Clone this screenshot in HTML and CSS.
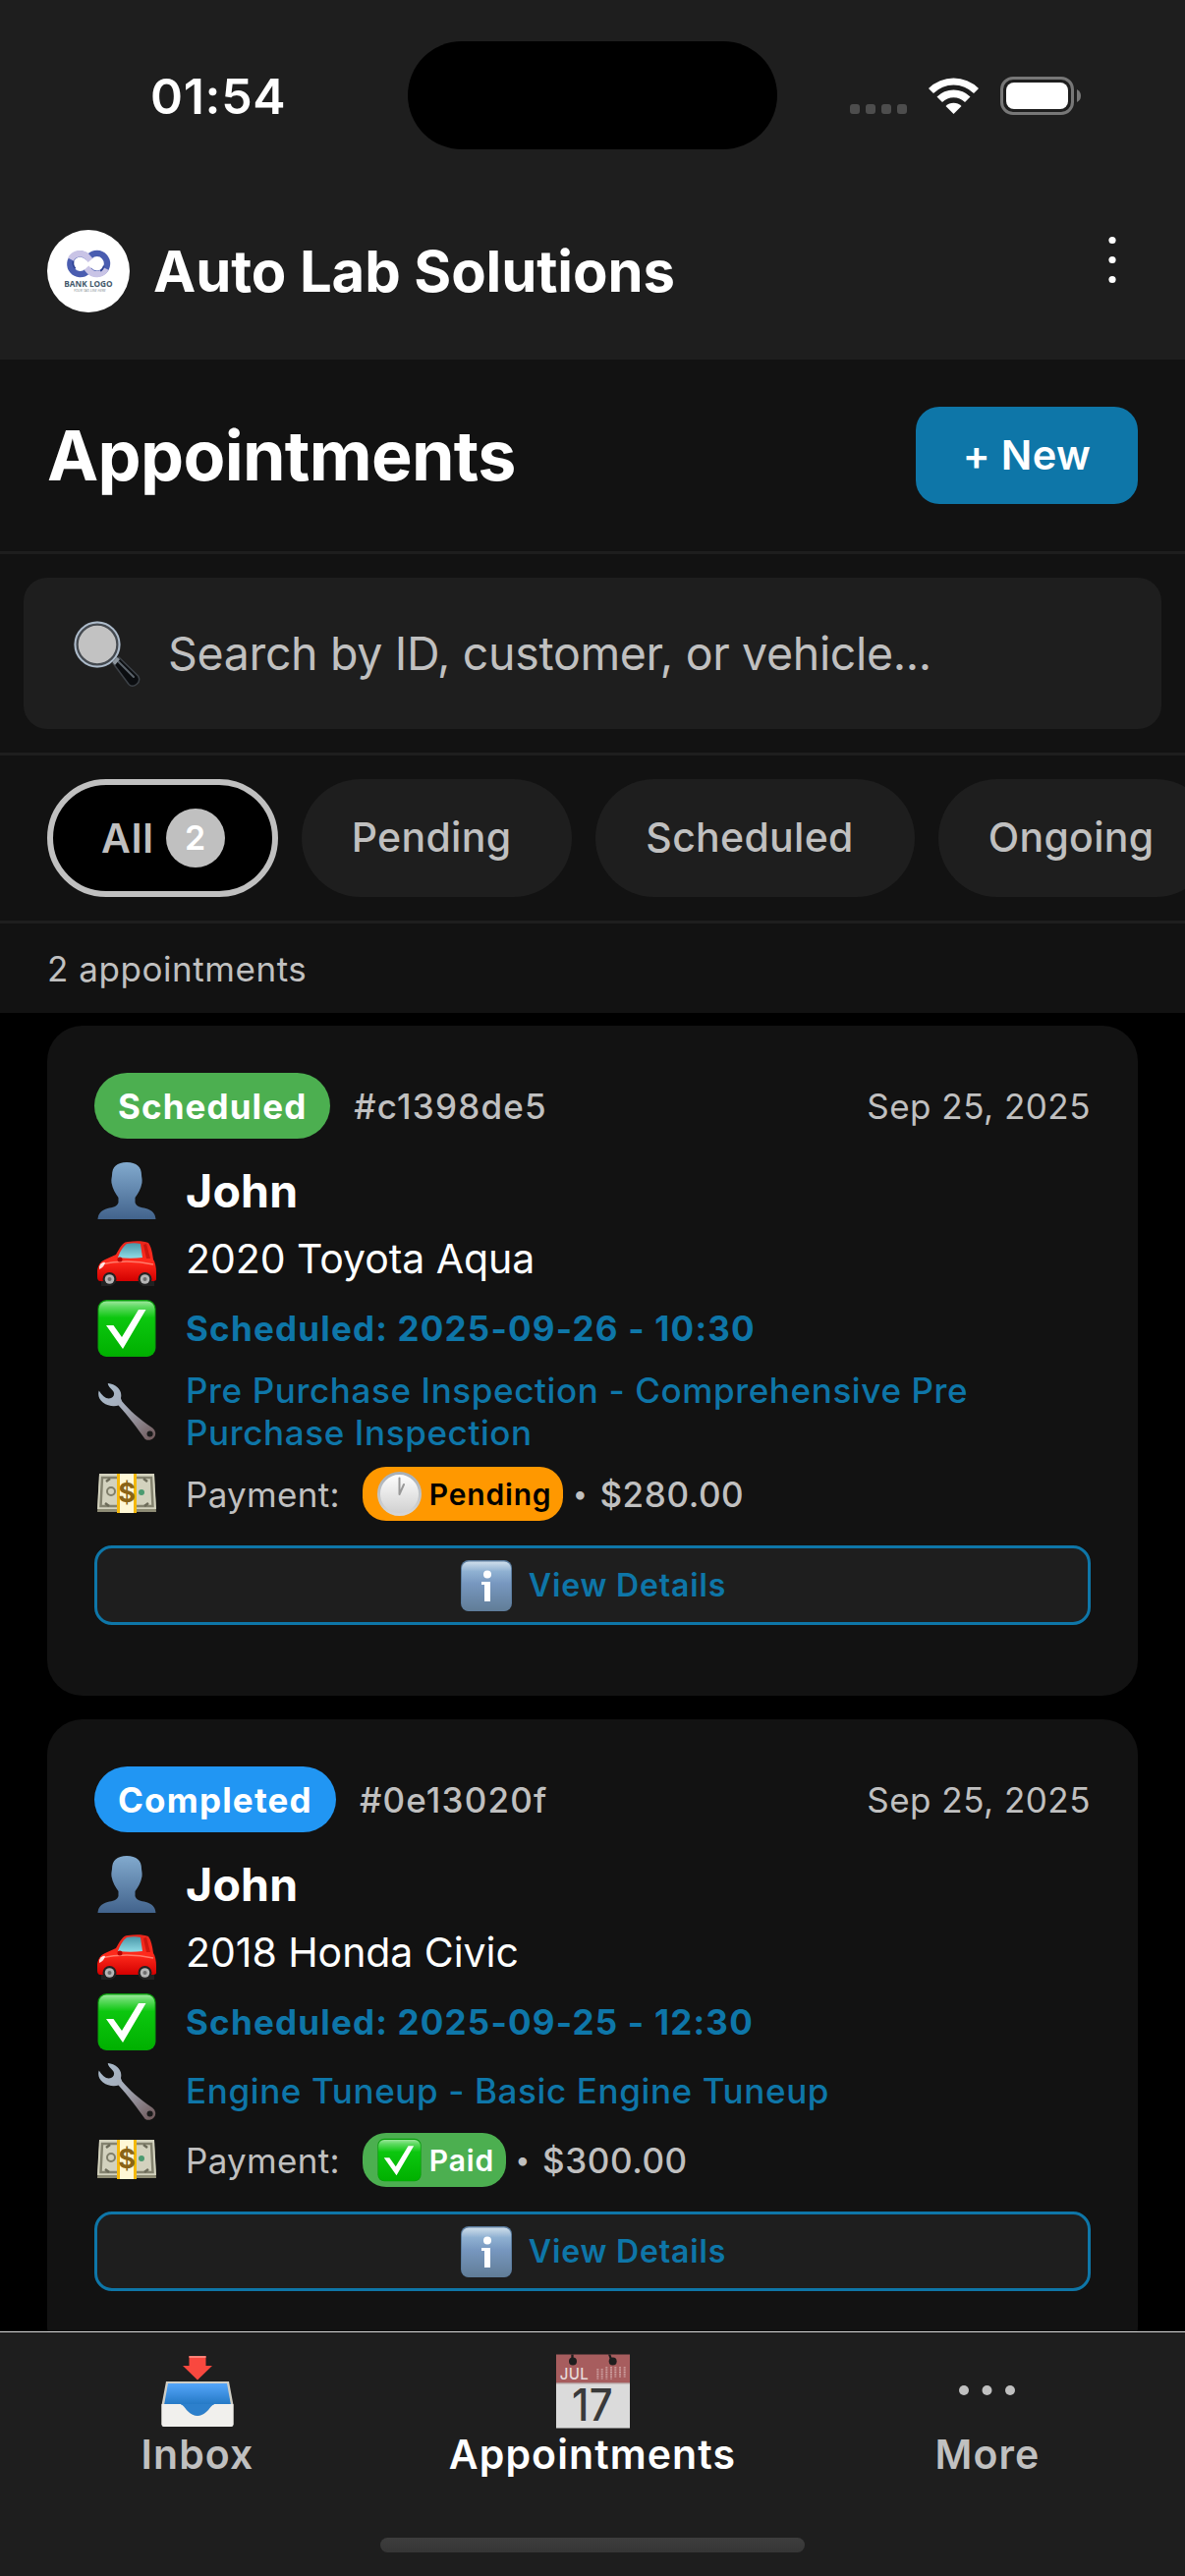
FILE: index.html
```html
<!DOCTYPE html>
<html lang="en">
<head>
<meta charset="utf-8">
<title>Appointments</title>
<link rel="stylesheet" href="styles.css">
</head>
<body>
<svg class="defs" width="0" height="0" aria-hidden="true">
  <defs>
    <linearGradient id="g-person" x1="0" y1="0" x2="0" y2="1"><stop offset="0" stop-color="#82aace"/><stop offset="1" stop-color="#42638c"/></linearGradient>
    <linearGradient id="g-check" x1="0" y1="0" x2="0" y2="1"><stop offset="0" stop-color="#9be89b"/><stop offset=".1" stop-color="#5fda62"/><stop offset=".3" stop-color="#0cc70f"/><stop offset="1" stop-color="#00b000"/></linearGradient>
    <linearGradient id="g-car" x1="0" y1="0" x2="0" y2="1"><stop offset="0" stop-color="#e8261c"/><stop offset=".5" stop-color="#ff2a1c"/><stop offset="1" stop-color="#d30000"/></linearGradient>
    <linearGradient id="g-glass" x1="0" y1="0" x2="0" y2="1"><stop offset="0" stop-color="#4a97a8"/><stop offset="1" stop-color="#8fdbe6"/></linearGradient>
    <linearGradient id="g-wrench" x1="0" y1="0" x2="1" y2="1"><stop offset="0" stop-color="#a9bccd"/><stop offset=".45" stop-color="#a5abb8"/><stop offset="1" stop-color="#6d5556"/></linearGradient>
    <linearGradient id="g-info" x1="0" y1="0" x2="0" y2="1"><stop offset="0" stop-color="#cfdeeb"/><stop offset=".2" stop-color="#8fb1d2"/><stop offset=".45" stop-color="#7797bf"/><stop offset="1" stop-color="#617d97"/></linearGradient>
    <linearGradient id="g-clock" x1="0" y1="0" x2="0" y2="1"><stop offset="0" stop-color="#ffffff"/><stop offset="1" stop-color="#cfcfcf"/></linearGradient>
    <linearGradient id="g-rim" x1="0" y1="0" x2="0" y2="1"><stop offset="0" stop-color="#a8b0b8"/><stop offset="1" stop-color="#d6d6d6"/></linearGradient>
    <linearGradient id="g-tray" x1="0" y1="0" x2="0" y2="1"><stop offset="0" stop-color="#55a6fa"/><stop offset="1" stop-color="#2378c4"/></linearGradient>

    <symbol id="person" viewBox="0 0 60 60"><path fill="url(#g-person)" d="M30 1c-10 0-15 5-15 13 0 2-1 4-.5 8 1 6 4 11 7 15v5c-1 4-6 5-11 6C4 50 1 53 .5 59h59c-.5-6-3.500-9-10-11-5-1-10-2-11-6v-5c3-4 6-9 7-15 .5-4-.5-6-.5-8C45 6 40 1 30 1z"/></symbol>
    <symbol id="car" viewBox="0 0 60 60">
      <path fill="#222" d="M4 44h10v9H4zM46 44h12v9H46z"/>
      <path fill="url(#g-car)" d="M0 39c0-6 3-11 8-13l11-5C23 14 26 8 31 8c8-1 16-1 21 1 3 4 4 10 5 17 2 3 3 8 3 13v7c0 1-1 2-3 2H3c-2 0-3-2-3-4z"/>
      <path fill="url(#g-glass)" d="M21 24c2-6 5-11 9-14 5-1 10-1 14 0l2 14c-8 1-16 1-25 0z"/>
      <path fill="#b30a05" d="M50 10l4 15h-4l-3-14z" opacity=".6"/>
      <path d="M3 31q27-6 54 0" stroke="#ff7a6a" stroke-width="1.500" fill="none"/>
      <path fill="#fff" opacity=".85" d="M2 33q3-5 6-4-1 5-6 7z"/>
      <circle cx="23" cy="26" r="2.500" fill="#b60000"/>
      <circle cx="12.500" cy="46" r="7" fill="#222"/><circle cx="12.500" cy="46" r="4.800" fill="#b5b5b5"/><circle cx="12.500" cy="46" r="2" fill="#6d6d6d"/>
      <circle cx="48.500" cy="46" r="7" fill="#222"/><circle cx="48.500" cy="46" r="4.800" fill="#b5b5b5"/><circle cx="48.500" cy="46" r="2" fill="#6d6d6d"/>
    </symbol>
    <symbol id="check" viewBox="0 0 60 60">
      <rect x=".5" y="1" width="59" height="58" rx="9" fill="#0a9c0d"/><rect x="1.500" y="2.500" width="57" height="56" rx="8" fill="url(#g-check)"/>
      <path fill="#fff" d="M9 27h7.500L25 39 42 11h7.500L26 51z"/>
    </symbol>
    <symbol id="wrench" viewBox="28 35 178 176">
      <path fill="url(#g-wrench)" d="M60 37C86 40 105 58 99 82l4 10c22 26 50 52 92 80a18 18 0 0 1-23 33C150 175 125 140 92 104 80 107 60 107 45 95 33 85 29 72 33 59 42 74 52 82 63 83 76 82 82 72 77 62 72 54 60 47 60 37z"/>
      <circle cx="187" cy="190" r="9" fill="#1a1a1a"/>
    </symbol>
    <symbol id="money" viewBox="0 0 60 42">
      <path fill="#8d8b74" d="M2 3h56l2 37H0z"/>
      <path fill="#d3d2be" d="M2 1h56l2 36H0z"/>
      <path d="M5 5h50l1.500 29h-53z" fill="none" stroke="#84836f" stroke-width="2.500"/>
      <circle cx="14" cy="19" r="4" fill="none" stroke="#807f6b" stroke-width="2"/><circle cx="45" cy="20" r="3" fill="#4b9b70"/>
      <path d="M9 9l4-3M51 9l-4-3M8 31l4 3M52 31l-4 3" stroke="#6c6b59" stroke-width="2.500"/>
      <path fill="#f5b90b" d="M20 1h20v40H20z"/><path fill="#fff8d6" d="M23 1h14v40H23z"/>
      <text x="30" y="30" font-family="Inter" font-size="27" font-weight="700" fill="#8a6417" text-anchor="middle">$</text>
    </symbol>
    <symbol id="clock" viewBox="0 0 45 45">
      <circle cx="22.500" cy="22.500" r="21" fill="url(#g-clock)" stroke="url(#g-rim)" stroke-width="3"/>
      <path d="M22.500 22.500V6.500M22.500 23l4.500-10" stroke="#999" stroke-width="2" stroke-linecap="round"/>
    </symbol>
    <symbol id="info" viewBox="0 0 54 54">
      <rect x="1" y="1" width="52" height="52" rx="8" fill="#5c7d9f"/><rect x="2" y="2.500" width="50" height="50" rx="7" fill="url(#g-info)"/>
      <circle cx="28" cy="15.500" r="4" fill="#fff"/><path fill="#fff" d="M22 23h9v20h-6V26h-3z"/>
    </symbol>
  </defs>
</svg>

<header class="top">
  <div class="status">
    <span class="time">01:54</span>
    <span class="island"></span>
    <svg class="signals" viewBox="860 70 250 54" width="250" height="54">
      <g fill="#4d4d4d"><rect x="865" y="106" width="10" height="10" rx="3"/><rect x="881" y="106" width="10" height="10" rx="3"/><rect x="897" y="106" width="10" height="10" rx="3"/><rect x="913" y="106" width="10" height="10" rx="3"/></g>
      <g fill="#fff"><path d="M945 90a36.500 36.500 0 0 1 51 0l-5 5a29 29 0 0 0-41 0z"/><path d="M953.500 98.500a24 24 0 0 1 34 0l-5.500 5.500a16.500 16.500 0 0 0-23 0z"/><path d="M962.500 108a11.500 11.500 0 0 1 16 0l-8 8z"/></g>
      <rect x="1019.500" y="79.500" width="72" height="36" rx="11.500" fill="none" stroke="#777" stroke-width="3"/>
      <rect x="1024" y="84" width="63" height="27" rx="8" fill="#fff"/>
      <path d="M1096 91q4 2 4 6.500t-4 6.500z" fill="#777"/>
    </svg>
  </div>
  <div class="brand">
    <svg class="logo" viewBox="54 42 252 252" width="84" height="84">
      <circle cx="180" cy="168" r="126" fill="#fff"/>
      <g fill="none" stroke-width="19">
        <path d="M180 128a31 31 0 1 0-4 41" stroke="#4a5db0"/>
        <path d="M181 163a31 31 0 1 0 3-40" stroke="#4a5db0"/>
        <path d="M126 132a31 31 0 0 1 52-6l8 9" stroke="#c9c4e6"/>
        <path d="M174 158l9 10a31 31 0 0 0 50-8" stroke="#c9c4e6"/>
        <path d="M134 138a24 24 0 0 0 6 22M227 152a24 24 0 0 1-10 16" stroke="#2b3f91" stroke-width="5"/>
      </g>
      <text class="logo-name" x="106" y="216" textLength="148" lengthAdjust="spacingAndGlyphs">BANK LOGO</text>
      <text class="logo-tag" x="135" y="230" textLength="98" lengthAdjust="spacingAndGlyphs">YOUR TAG LINE HERE</text>
    </svg>
    <h1>Auto Lab Solutions</h1>
    <svg class="kebab" viewBox="0 0 52 84" width="52" height="84" fill="#fff"><circle cx="26" cy="10.500" r="3.600"/><circle cx="26" cy="30.500" r="3.600"/><circle cx="26" cy="50.500" r="3.600"/></svg>
  </div>
</header>

<section class="heading">
  <h2>Appointments</h2>
  <button class="new">+ New</button>
</section>

<section class="search-bar">
  <div class="search">
    <svg viewBox="72 629 72 72" width="72" height="72">
      <path d="M115 675l6-6 19.500 19q3 5-1.500 8.500t-8 0z" fill="#0b0d10" stroke="#3d4248" stroke-width="1.500"/>
      <path d="M120 673l16 16" stroke="#5b636b" stroke-width="2" stroke-linecap="round"/>
      <path d="M112 671l4-4 6 4-5 6z" fill="#8d969e"/>
      <circle cx="99" cy="656" r="21.500" fill="#c2c2c2" stroke="#454a50" stroke-width="4.500"/>
      <circle cx="99" cy="656" r="22.500" fill="none" stroke="#aebccb" stroke-width="2"/>
    </svg>
    <span>Search by ID, customer, or vehicle...</span>
  </div>
</section>

<nav class="chips">
  <span class="chip active">All<b>2</b></span>
  <span class="chip">Pending</span>
  <span class="chip">Scheduled</span>
  <span class="chip">Ongoing</span>
</nav>

<p class="count">2 appointments</p>

<main class="list">
  <article class="card">
    <div class="card-head"><span class="badge scheduled">Scheduled</span><span class="id">#c1398de5</span><time>Sep 25, 2025</time></div>
    <div class="row"><svg class="ico"><use href="#person"/></svg><span class="name">John</span></div>
    <div class="row"><svg class="ico car"><use href="#car"/></svg><span class="vehicle">2020 Toyota Aqua</span></div>
    <div class="row"><svg class="ico"><use href="#check"/></svg><span class="slot">Scheduled: 2025-09-26 - 10:30</span></div>
    <div class="row two-line"><svg class="ico"><use href="#wrench"/></svg><span class="service">Pre Purchase Inspection - Comprehensive Pre Purchase Inspection</span></div>
    <div class="row pay"><svg class="ico bill"><use href="#money"/></svg><span class="label">Payment:</span><span class="pill pending"><svg><use href="#clock"/></svg>Pending</span><span class="dot">•</span><span class="price">$280.00</span></div>
    <button class="details"><svg><use href="#info"/></svg>View Details</button>
  </article>
  <article class="card">
    <div class="card-head"><span class="badge completed">Completed</span><span class="id">#0e13020f</span><time>Sep 25, 2025</time></div>
    <div class="row"><svg class="ico"><use href="#person"/></svg><span class="name">John</span></div>
    <div class="row"><svg class="ico car"><use href="#car"/></svg><span class="vehicle">2018 Honda Civic</span></div>
    <div class="row"><svg class="ico"><use href="#check"/></svg><span class="slot">Scheduled: 2025-09-25 - 12:30</span></div>
    <div class="row one-line"><svg class="ico"><use href="#wrench"/></svg><span class="service">Engine Tuneup - Basic Engine Tuneup</span></div>
    <div class="row pay"><svg class="ico bill"><use href="#money"/></svg><span class="label">Payment:</span><span class="pill paid"><svg><use href="#check"/></svg>Paid</span><span class="dot">•</span><span class="price">$300.00</span></div>
    <button class="details"><svg><use href="#info"/></svg>View Details</button>
  </article>
</main>

<footer class="tabbar">
  <div class="tabs">
    <div class="tab">
      <svg viewBox="0 0 76 76" width="76" height="76">
        <path d="M6 28h64l4.500 24v20H1.500V52z" fill="#cfcdc4"/>
        <path d="M8 30h60l4 22H4z" fill="url(#g-tray)"/>
        <path d="M1.500 51H20c5 0 7 11 18 12 11-1 13-12 18-12h18.500v21q0 2-2 2h-69q-2 0-2-2z" fill="#f1f0ed"/>
        <path d="M20 51c5 0 7 11 18 12 11-1 13-12 18-12z" fill="#2d80cc"/>
        <path d="M29.500 2h17v10H53L38 26.500 23 12h6.500z" fill="#f9483f"/>
        <path d="M29.500 2h17v2h-17z" fill="#ff8177"/>
      </svg>
      <span>Inbox</span>
    </div>
    <div class="tab current">
      <svg class="calendar" viewBox="45 36 225 225" width="75" height="76">
        <path d="M45 36h225v88H45z" fill="#a75d5e"/><path d="M45 124h225v137H45z" fill="#dbdbdb"/><path d="M45 122h225v4H45z" fill="#b9a5a5"/>
        <path d="M91 36h7v14h-7zM204 36h7l6 16h-7z" fill="#1e1e1e"/><circle cx="96" cy="57" r="12" fill="#1e1e1e"/><circle cx="218" cy="57" r="12" fill="#1e1e1e"/>
        <path d="M172 80v31M185 80v31M199 74v37M213 74v37M226 74v31M240 74v31M254 74v31" stroke="#d3acac" stroke-width="6" stroke-dasharray="4 3"/>
        <text x="56" y="111" textLength="88" lengthAdjust="spacingAndGlyphs" font-family="Inter" font-size="49" font-weight="500" fill="#e6d8d8">JUL</text>
        <text x="93" y="238" textLength="126" lengthAdjust="spacingAndGlyphs" font-family="Inter" font-size="134" font-weight="500" fill="#3a3a3a">17</text>
      </svg>
      <span>Appointments</span>
    </div>
    <div class="tab">
      <svg viewBox="0 0 76 76" width="76" height="76" fill="#c0c0c0"><circle cx="14" cy="37" r="5"/><circle cx="37.500" cy="37" r="5"/><circle cx="61" cy="37" r="5"/></svg>
      <span>More</span>
    </div>
  </div>
  <div class="home"></div>
</footer>
</body>
</html>
```
FILE: styles.css
```css
* { box-sizing: border-box; }
body {
  margin: 0;
  width: 1206px;
  height: 2622px;
  display: flex;
  flex-direction: column;
  overflow: hidden;
  background: #000;
  color: #fff;
  font-family: Inter, "Liberation Sans", sans-serif;
  white-space: nowrap;
}
svg { display: block; flex: none; }
.defs { position: absolute; }
h1, h2, p { margin: 0; }
button { font-family: inherit; margin: 0; }

.top { background: #1e1e1e; height: 366px; }
.status {
  display: grid;
  grid-template-columns: 415px 376px 415px;
  align-items: center;
  height: 186px;
  padding-top: 8px;
}
.time { padding-left: 153px; font-size: 50px; font-weight: 600; letter-spacing: .7px; padding-top: 2px; }
.island { height: 110px; border-radius: 55px; background: #000; }
.signals { margin-left: 69px; }
.brand { display: flex; align-items: center; height: 180px; padding: 0 48px; }
.brand h1 { margin-left: 24px; flex: 1; font-size: 58px; font-weight: 700; letter-spacing: -.1px; }
.logo-name { font-family: "Open Sans", sans-serif; font-weight: 700; font-size: 25px; fill: #43586a; }
.logo-tag { font-family: "Open Sans", sans-serif; font-style: italic; font-size: 11px; fill: #7d8790; }

.heading {
  display: flex;
  justify-content: space-between;
  align-items: center;
  padding: 48px;
  background: #121212;
  border-bottom: 3px solid #1e1e1e;
}
.heading h2 { font-size: 70px; line-height: 99px; font-weight: 700; letter-spacing: -.7px; }
.new {
  width: 226px;
  height: 99px;
  padding: 0 0 2px;
  border: 0;
  border-radius: 24px;
  background: #0e76a8;
  color: #fff;
  font-size: 41.5px;
  font-weight: 600;
  letter-spacing: .4px;
}

.search-bar { padding: 24px; background: #121212; border-bottom: 3px solid #1e1e1e; }
.search {
  display: flex;
  align-items: center;
  gap: 27px;
  height: 154px;
  padding: 0 48px;
  border-radius: 24px;
  background: #1e1e1e;
  color: #c0c0c0;
  font-size: 46.5px;
  letter-spacing: -.34px;
}

.chips {
  display: flex;
  gap: 24px;
  padding: 24px 0 24px 48px;
  overflow: hidden;
  background: #121212;
  border-bottom: 3px solid #1e1e1e;
  flex: none;
}
.chip {
  display: flex;
  align-items: center;
  flex: none;
  height: 120px;
  padding: 0 62px 2px 51px;
  border-radius: 60px;
  background: #1e1e1e;
  color: #c0c0c0;
  font-size: 41px;
  font-weight: 500;
  letter-spacing: .3px;
}
.chip.active {
  gap: 12px;
  padding: 0 48px 0 49px;
  border: 6px solid #c0c0c0;
  background: #000;
  font-weight: 600;
  letter-spacing: .8px;
}
.chip b {
  width: 60px;
  border-radius: 30px;
  background: #c0c0c0;
  color: #fff;
  font-size: 34px;
  font-weight: 600;
  line-height: 60px;
  letter-spacing: 0;
  text-align: center;
}

.count {
  flex: none;
  height: 91px;
  padding-left: 48px;
  background: #121212;
  color: #c0c0c0;
  font-size: 35px;
  line-height: 93px;
  letter-spacing: .55px;
}

.list {
  flex: 1;
  min-height: 0;
  display: flex;
  flex-direction: column;
  gap: 24px;
  padding: 13px 48px 0;
  overflow: hidden;
}
.card { flex: none; padding: 48px 48px 72px; border-radius: 36px; background: #121212; font-size: 35px; }
.card-head { display: flex; align-items: center; gap: 24px; height: 67px; margin-bottom: 18px; color: #c0c0c0; }
.badge { padding: 0 24px; border-radius: 34px; color: #fff; font-weight: 700; line-height: 68px; height: 67px; letter-spacing: 1.100px; }
.scheduled { background: #4caf50; }
.completed { background: #2196f3; letter-spacing: 1.200px; }
.id { font-weight: 500; letter-spacing: 1.200px; }
.card-head time { margin-left: auto; letter-spacing: .5px; }
.row { display: flex; align-items: center; height: 70px; }
.row.one-line { height: 71px; }
.row.two-line { height: 99px; }
.row.pay { height: 69px; color: #c0c0c0; }
.ico { width: 60px; height: 60px; margin: 0 30px 0 3px; }
.ico.car { margin-top: 7px; }
.ico.bill { height: 42px; margin-top: -2px; }
.name { font-size: 46.5px; font-weight: 700; letter-spacing: .2px; }
.vehicle { padding-bottom: 2px; font-size: 41px; letter-spacing: -.05px; }
.slot { color: #0e76a8; font-weight: 700; letter-spacing: 1.200px; }
.service { width: 830px; color: #0e76a8; font-weight: 500; line-height: 43px; letter-spacing: .62px; white-space: normal; }
.label { margin-right: 23px; letter-spacing: .3px; }
.pill {
  display: flex;
  align-items: center;
  gap: 8px;
  height: 55px;
  padding: 0 12px 0 15px;
  border-radius: 24px;
  font-size: 30px;
  font-weight: 600;
  letter-spacing: .8px;
}
.pill svg { width: 45px; height: 45px; }
.pending { background: #ff9800; color: #000; }
.paid { background: #4caf50; }
.pill.paid { color: #fff; }
.dot { width: 37px; padding-right: 3px; font-size: 27px; text-align: center; }
.price { font-weight: 500; letter-spacing: .6px; }
.details {
  display: flex;
  align-items: center;
  justify-content: center;
  gap: 16px;
  width: 100%;
  height: 81px;
  margin-top: 18px;
  padding: 0 0 0 1px;
  border: 3px solid #0e76a8;
  border-radius: 18px;
  background: #1e1e1e;
  color: #0e76a8;
  font-size: 32px;
  font-weight: 600;
  letter-spacing: .85px;
}
.details svg { width: 54px; height: 54px; }

.tabbar { flex: none; height: 249px; border-top: 1px solid #d8d8d8; background: #1e1e1e; }
.tabs { display: grid; grid-template-columns: repeat(3, 1fr); padding-top: 22px; }
.tab { display: flex; flex-direction: column; align-items: center; color: #c0c0c0; font-size: 41px; font-weight: 600; line-height: 52px; letter-spacing: 1.100px; }
.tab.current { color: #fff; }
.calendar { overflow: visible; }
.home { width: 432px; height: 15px; margin: 59px auto 0; border-radius: 8px; background: linear-gradient(#3d3d3d, #363636); }
```
